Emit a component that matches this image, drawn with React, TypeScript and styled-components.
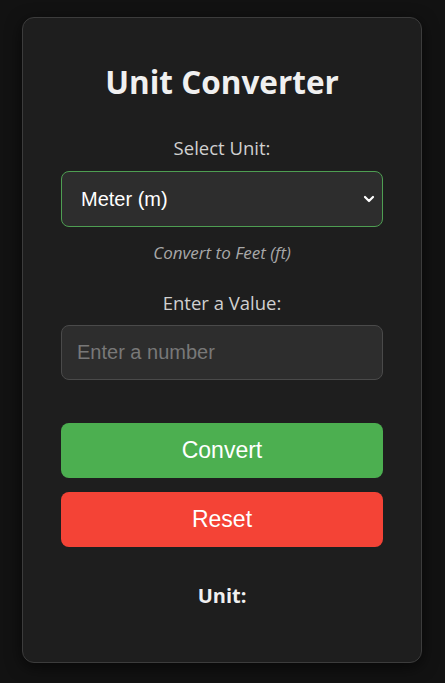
import React, { useState } from "react";
import styled, { createGlobalStyle } from "styled-components";

const GlobalStyle = createGlobalStyle`
  html, body {
    margin: 0;
    padding: 0;
    background: #121212;
  }
  body {
    font-family: "Open Sans", "Noto Sans", sans-serif;
    color: #e6e6e6;
  }
`;

const Page = styled.div`
  min-height: 683px;
  display: flex;
  justify-content: flex-start;
  align-items: flex-start;
  padding: 17px 0 0 22px;
  box-sizing: border-box;
`;

const Card = styled.div`
  width: 400px;
  height: 646px;
  box-sizing: border-box;
  background: #1e1e1e;
  border: 1px solid #3c3c3c;
  border-radius: 12px;
  box-shadow: 0 4px 16px rgba(0, 0, 0, 0.6);
  padding: 45px 38px 0;
  display: flex;
  flex-direction: column;
  align-items: stretch;
`;

const Title = styled.h1`
  margin: 0 0 35px;
  text-align: center;
  font-size: 31.5px;
  line-height: 38px;
  font-weight: 700;
  color: #f0f0f0;
`;

const Label = styled.label<{ $gap: number }>`
  display: block;
  text-align: center;
  font-size: 18.5px;
  line-height: 24px;
  color: #d0d0d0;
  margin-bottom: ${(p) => p.$gap}px;
`;

const SelectWrap = styled.div`
  position: relative;
`;

const Select = styled.select`
  width: 100%;
  height: 56px;
  box-sizing: border-box;
  appearance: none;
  background: #2d2d2d;
  border: 1px solid #4e9e52;
  border-radius: 8px;
  color: #ffffff;
  font-family: "Liberation Sans", Arial, sans-serif;
  font-size: 20px;
  padding: 0 40px 0 19px;
  outline: none;
`;

const Chevron = styled.svg`
  position: absolute;
  right: 4px;
  top: 50%;
  transform: translateY(-50%);
  pointer-events: none;
`;

const Hint = styled.p`
  margin: 15px 0 27px;
  text-align: center;
  font-style: italic;
  font-size: 17px;
  line-height: 22px;
  color: #a8a8a8;
`;

const Input = styled.input`
  width: 100%;
  height: 55px;
  box-sizing: border-box;
  background: #2d2d2d;
  border: 1px solid #4a4a4a;
  border-radius: 8px;
  color: #ffffff;
  font-family: "Liberation Sans", Arial, sans-serif;
  font-size: 20px;
  padding: 0 15px;
  outline: none;

  &::placeholder {
    color: #787878;
  }
`;

const Buttons = styled.div`
  margin-top: 43px;
  display: flex;
  flex-direction: column;
  gap: 14px;
`;

const Button = styled.button<{ $color: string }>`
  height: 55px;
  border: none;
  border-radius: 8px;
  background: ${(p) => p.$color};
  color: #ffffff;
  font-family: "Liberation Sans", Arial, sans-serif;
  font-size: 23px;
  cursor: pointer;
`;

const Result = styled.div`
  margin-top: 35px;
  text-align: center;
  font-size: 20px;
  line-height: 27px;
  font-weight: 700;
  color: #f0f0f0;
`;

const units = [
  { value: "m", label: "Meter (m)", target: "Feet (ft)" },
  { value: "ft", label: "Feet (ft)", target: "Meter (m)" },
  { value: "kg", label: "Kilogram (kg)", target: "Pound (lb)" },
];

export default function App() {
  const [unit, setUnit] = useState("m");
  const [value, setValue] = useState("");
  const current = units.find((u) => u.value === unit)!;

  return (
    <>
      <GlobalStyle />
      <Page>
        <Card>
          <Title>Unit Converter</Title>
          <Label $gap={11}>Select Unit:</Label>
          <SelectWrap>
            <Select value={unit} onChange={(e) => setUnit(e.target.value)}>
              {units.map((u) => (
                <option key={u.value} value={u.value}>
                  {u.label}
                </option>
              ))}
            </Select>
            <Chevron width="20" height="20" viewBox="0 0 20 20">
              <path d="M6 8l4 4 4-4" fill="none" stroke="#ffffff" strokeWidth="2.2" strokeLinecap="round" strokeLinejoin="round" />
            </Chevron>
          </SelectWrap>
          <Hint>Convert to {current.target}</Hint>
          <Label $gap={10}>Enter a Value:</Label>
          <Input
            type="number"
            placeholder="Enter a number"
            value={value}
            onChange={(e) => setValue(e.target.value)}
          />
          <Buttons>
            <Button $color="#4caf50">Convert</Button>
            <Button $color="#f44336" onClick={() => setValue("")}>
              Reset
            </Button>
          </Buttons>
          <Result>Unit:</Result>
        </Card>
      </Page>
    </>
  );
}
